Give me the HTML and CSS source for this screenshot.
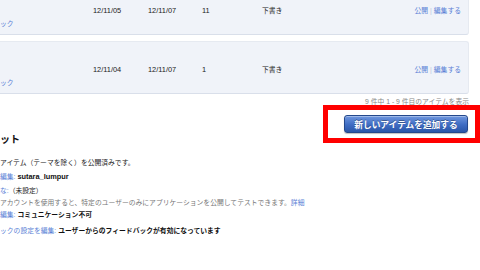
FILE: index.html
```html
<!DOCTYPE html>
<html lang="ja">
<head>
    <meta charset="UTF-8">
    <meta name="viewport" content="width=device-width, initial-scale=1.0">
    <title>アイテム一覧</title>
    <link rel="stylesheet" href="styles.css">
</head>
<body>
    <div class="page">
        <div class="items">
            <div class="row">
                <span class="cell num">12/11/05</span>
                <span class="cell num">12/11/07</span>
                <span class="cell num">11</span>
                <span class="cell">下書き</span>
                <span class="cell links"><a href="#">公開</a><span class="sep">|</span><a href="#">編集する</a></span>
                <a class="sub" href="#">ック</a>
            </div>
            <div class="row">
                <span class="cell num">12/11/04</span>
                <span class="cell num">12/11/07</span>
                <span class="cell num">1</span>
                <span class="cell">下書き</span>
                <span class="cell links"><a href="#">公開</a><span class="sep">|</span><a href="#">編集する</a></span>
                <a class="sub" href="#">ック</a>
            </div>
        </div>

        <div class="pager">9 件中 1 - 9 件目のアイテムを表示</div>

        <div class="actions">
            <button class="add-btn">新しいアイテムを追加する</button>
        </div>

        <h2 class="section-title">ット</h2>
        <ul class="summary">
            <li>アイテム（テーマを除く）を公開済みです。</li>
            <li><a href="#">編集:</a> <strong class="num">sutara_lumpur</strong></li>
            <li><a href="#">な:</a>（未設定）</li>
            <li class="note">アカウントを使用すると、特定のユーザーのみにアプリケーションを公開してテストできます。<a href="#">詳細</a></li>
            <li><a href="#">編集:</a> <strong>コミュニケーション不可</strong></li>
            <li class="last"><a href="#">ックの設定を編集:</a> <strong>ユーザーからのフィードバックが有効になっています</strong></li>
        </ul>

        <!-- screenshot annotation -->
        <div class="highlight"></div>
    </div>
</body>
</html>
```

FILE: styles.css
```css
/* Base */
body {
    margin: 0;
    padding: 0;
    font-family: 'Liberation Sans', 'Noto Sans CJK JP', sans-serif;
    font-size: 6.8px;
    color: #222;
    background-color: #fff;
    overflow: hidden;
}

a {
    color: #5a7fd6;
    text-decoration: none;
}

.page {
    position: relative;
    display: flow-root;
    width: 480px;
    height: 270px;
}

.num {
    font-size: 7.4px;
}

/* Item rows */
.items {
    margin-top: -18px;
    margin-right: 11px;
}

.row {
    display: grid;
    grid-template-columns: 93px 55px 54px 60px 1fr auto;
    grid-template-rows: 12px 14px;
    align-items: center;
    height: 53px;
    box-sizing: border-box;
    padding: 21px 7px 0 0;
    margin-bottom: 6px;
    background-color: #f0f3f9;
    border: 1px solid #e6eaf1;
    border-bottom-color: #d9dfea;
    border-left: none;
    border-radius: 0 3px 3px 0;
}

.row .cell:first-child {
    grid-column: 2;
}

.links {
    justify-self: end;
}

.sep {
    color: #b8c4dd;
    margin: 0 2px;
}

.sub {
    grid-column: 1;
    grid-row: 2;
}

/* Pager and action */
.pager {
    margin: -3px 11px 0 0;
    line-height: 9px;
    text-align: right;
    color: #888;
}

.actions {
    display: flex;
    justify-content: flex-end;
    margin: 9px 12px 0 0;
}

.add-btn {
    height: 18px;
    width: 124px;
    padding: 0;
    font-family: 'Liberation Sans', 'Noto Sans CJK JP', sans-serif;
    font-size: 8.7px;
    font-weight: bold;
    color: #fff;
    text-shadow: 0 -1px 0 rgba(0, 0, 0, 0.3);
    background: linear-gradient(#6f97df, #3e6cc3 55%, #2a56a8);
    border: 1px solid #24488c;
    border-radius: 3px;
    box-shadow: inset 0 1px 0 rgba(255, 255, 255, 0.35), 0 1px 1px rgba(0, 0, 0, 0.25);
}

/* Summary */
.section-title {
    margin: 1px 0 0 0;
    font-size: 10px;
    line-height: 12px;
    font-weight: bold;
    color: #111;
}

.summary {
    list-style: none;
    margin: 10px 0 0 0;
    padding: 0;
}

.summary li {
    line-height: 14px;
}

.summary li.note {
    line-height: 10px;
    color: #777;
}

.summary li.last {
    margin-top: 2px;
}

.summary strong {
    color: #111;
}

/* Red annotation box over the button */
.highlight {
    position: absolute;
    left: 323px;
    top: 105px;
    width: 157px;
    height: 38px;
    box-sizing: border-box;
    border: 5px solid #ff0000;
}
```
